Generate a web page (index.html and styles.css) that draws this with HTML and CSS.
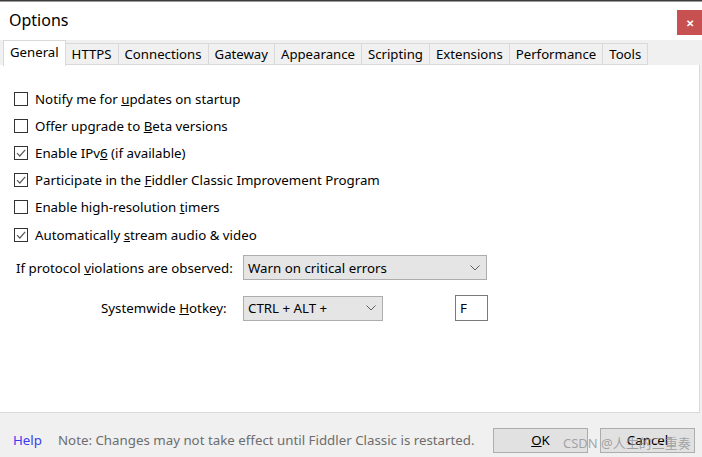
FILE: index.html
```html
<!DOCTYPE html>
<html>
<head>
<meta charset="utf-8">
<link rel="stylesheet" href="styles.css">
</head>
<body>
<div class="window">
  <div class="topline"></div>
  <div class="titlebar">
    <span class="title">Options</span>
    <span class="close">&#x2715;</span>
  </div>
  <div class="body">
    <div class="tabs">
      <div class="tab active">General</div>
      <div class="tab">HTTPS</div>
      <div class="tab">Connections</div>
      <div class="tab">Gateway</div>
      <div class="tab">Appearance</div>
      <div class="tab">Scripting</div>
      <div class="tab">Extensions</div>
      <div class="tab">Performance</div>
      <div class="tab">Tools</div>
    </div>
    <div class="panel">
      <div class="checks">
        <label class="check"><span class="box"></span><span class="txt">Notify me for <u>u</u>pdates on startup</span></label>
        <label class="check"><span class="box"></span><span class="txt">Offer upgrade to <u>B</u>eta versions</span></label>
        <label class="check"><span class="box checked"><svg viewBox="0 0 12 12" width="12" height="12"><path d="M2 6.2 L4.8 9 L10.2 2.8" fill="none" stroke="#5a5a5a" stroke-width="1.2"/></svg></span><span class="txt">Enable IPv<u>6</u> (if available)</span></label>
        <label class="check"><span class="box checked"><svg viewBox="0 0 12 12" width="12" height="12"><path d="M2 6.2 L4.8 9 L10.2 2.8" fill="none" stroke="#5a5a5a" stroke-width="1.2"/></svg></span><span class="txt">Participate in the <u>F</u>iddler Classic Improvement Program</span></label>
        <label class="check"><span class="box"></span><span class="txt">Enable high-resolution <u>t</u>imers</span></label>
        <label class="check"><span class="box checked"><svg viewBox="0 0 12 12" width="12" height="12"><path d="M2 6.2 L4.8 9 L10.2 2.8" fill="none" stroke="#5a5a5a" stroke-width="1.2"/></svg></span><span class="txt">Automatically <u>s</u>tream audio &amp; video</span></label>
      </div>
      <div class="field row1">
        <span class="label">If protocol <u>v</u>iolations are observed:</span>
        <div class="select wide"><span>Warn on critical errors</span><svg class="chev" viewBox="0 0 10 6" width="10" height="6"><path d="M0.5 0.5 L5 5 L9.5 0.5" fill="none" stroke="#606060" stroke-width="1"/></svg></div>
      </div>
      <div class="field row2">
        <span class="label short">Systemwide <u>H</u>otkey:</span>
        <div class="select narrow"><span>CTRL + ALT +</span><svg class="chev" viewBox="0 0 10 6" width="10" height="6"><path d="M0.5 0.5 L5 5 L9.5 0.5" fill="none" stroke="#606060" stroke-width="1"/></svg></div>
        <div class="textbox">F</div>
      </div>
    </div>
    <div class="footer">
      <span class="help">Help</span>
      <span class="note">Note: Changes may not take effect until Fiddler Classic is restarted.</span>
      <div class="btn ok"><u>O</u>K</div>
      <div class="btn cancel">Cancel</div>
      <span class="watermark">CSDN @人生的三重奏</span>
    </div>
  </div>
</div>
</body>
</html>
```
FILE: styles.css
```css
* { box-sizing: border-box; }
html, body { margin: 0; padding: 0; }
body {
  width: 702px;
  height: 457px;
  overflow: hidden;
  background: #ffffff;
  font-family: "Noto Sans", "Noto Sans CJK SC", sans-serif;
  font-size: 13.3px;
  color: #000;
}
.window { width: 702px; height: 457px; display: flex; flex-direction: column; }
.topline { height: 2px; border-top: 1px solid #3c3c3c; border-bottom: 1px solid #9a9a9a; }
.titlebar {
  height: 38px;
  display: flex;
  align-items: center;
  justify-content: space-between;
  background: #fff;
}
.title { font-size: 16px; padding-left: 9px; margin-top: -2px; }
.close {
  width: 25px; height: 25px;
  margin-top: 3px;
  background: #c75050;
  color: #fff;
  font-size: 10px;
  font-weight: bold;
  display: flex; align-items: center; justify-content: center;
}
.body { flex: 1; background: #f0f0f0; display: flex; flex-direction: column; position: relative; }
.tabs { display: flex; align-items: flex-end; height: 25px; padding-left: 3px; }
.tab {
  height: 22px;
  padding: 0 6px;
  border: 1px solid #d9d9d9;
  border-left: none;
  background: #f0f0f0;
  display: flex; align-items: center;
  font-size: 13.2px;
  color: #000;
}
.tab.active {
  height: 26px;
  margin-bottom: -1px;
  background: #fff;
  border-left: 1px solid #d9d9d9;
  border-bottom: none;
  position: relative;
  padding: 0 6px 4px;
}
.panel {
  height: 348px;
  width: 700px;
  background: #fff;
  border-right: 1px solid #d9d9d9;
  border-bottom: 1px solid #d9d9d9;
  padding-top: 20px;
}
.checks { display: flex; flex-direction: column; padding-left: 14px; }
.check { display: flex; align-items: center; height: 27.2px; }
.box {
  width: 14px; height: 14px;
  border: 1px solid #333;
  background: #fff;
  margin-right: 7px;
  display: flex; align-items: center; justify-content: center;
}
.box svg { display: block; }
.field { display: flex; align-items: center; }
.row1 { margin-top: 7px; padding-left: 16px; }
.row2 { margin-top: 15px; padding-left: 101px; }
.label { width: 227px; }
.label.short { width: 142px; }
.select {
  height: 25px;
  background: #e5e5e5;
  border: 1px solid #adadad;
  display: flex; align-items: center; justify-content: space-between;
  padding: 0 6px 0 4px;
}
.select.wide { width: 244px; }
.select.narrow { width: 140px; }
.chev { display: block; }
.textbox {
  margin-left: 72px;
  width: 33px; height: 26px;
  border: 1px solid #7a7a7a;
  background: #fff;
  padding-left: 4px;
  display: flex; align-items: center;
}
.footer { flex: 1; display: flex; align-items: center; padding: 10px 0 0 13px; position: relative; }
.help { color: #3b3bf0; width: 45px; }
.note { color: #6d6d6d; width: 435px; white-space: nowrap; }
.btn {
  width: 95px; height: 25px;
  background: #e1e1e1;
  border: 1px solid #adadad;
  display: flex; align-items: center; justify-content: center;
}
.cancel { margin-left: 12px; }
.watermark {
  position: absolute;
  left: 563px; top: 20px;
  font-size: 13px;
  color: rgba(140,140,140,0.75);
  white-space: nowrap;
}
```
